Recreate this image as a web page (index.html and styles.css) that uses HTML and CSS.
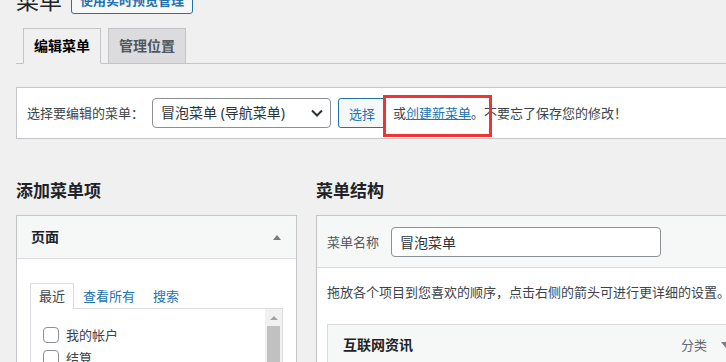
FILE: index.html
```html
<!DOCTYPE html>
<html>
<head>
  <meta charset="utf-8">
  <title>菜单</title>
  <link rel="stylesheet" href="styles.css">
</head>
<body>
  <div class="wrap">
    <div class="title-row">
      <h1>菜单</h1>
      <a class="title-action" href="#">使用实时预览管理</a>
    </div>

    <div class="nav-tabs">
      <a class="nav-tab active" href="#">编辑菜单</a>
      <a class="nav-tab" href="#">管理位置</a>
    </div>

    <div class="manage-menus">
      <label class="select-label">选择要编辑的菜单：</label>
      <div class="select">
        <span>冒泡菜单 (导航菜单)</span>
        <svg width="12" height="8" viewBox="0 0 12 8"><path d="M1 1.5l5 5 5-5" fill="none" stroke="#2c3338" stroke-width="2"/></svg>
      </div>
      <button class="button">选择</button>
      <span class="create-note">或<a href="#">创建新菜单</a>。不要忘了保存您的修改！</span>
      <div class="highlight"></div>
    </div>

    <div class="columns">
      <div class="settings-column">
        <h2>添加菜单项</h2>
        <div class="accordion">
          <div class="accordion-title">
            <h3>页面</h3>
            <span class="arrow-up"></span>
          </div>
          <div class="accordion-content">
            <ul class="tabs">
              <li class="active">最近</li>
              <li><a href="#">查看所有</a></li>
              <li><a href="#">搜索</a></li>
            </ul>
            <div class="tabs-panel">
              <ul class="checklist">
                <li><input type="checkbox">我的帐户</li>
                <li><input type="checkbox">结算</li>
                <li><input type="checkbox">购物车</li>
              </ul>
              <div class="scrollbar">
                <div class="scroll-btn"><span></span></div>
                <div class="scroll-thumb"></div>
              </div>
            </div>
          </div>
        </div>
      </div>

      <div class="management">
        <h2>菜单结构</h2>
        <div class="menu-edit">
          <div class="menu-edit-header">
            <label>菜单名称</label>
            <input class="menu-name" type="text" value="冒泡菜单">
          </div>
          <div class="menu-edit-body">
            <p>拖放各个项目到您喜欢的顺序，点击右侧的箭头可进行更详细的设置。</p>
            <div class="menu-item">
              <span class="item-title">互联网资讯</span>
              <span class="item-type">分类</span>
              <span class="arrow-down"></span>
            </div>
          </div>
        </div>
      </div>
    </div>
  </div>
</body>
</html>
```

FILE: styles.css
```css
/* WordPress style menu editor */
html,
body {
  margin: 0;
  height: 100%;
  overflow: hidden;
}

body {
  background: #f0f0f1;
  color: #3c434a;
  font-family: "Noto Sans", "Noto Sans CJK SC", sans-serif;
  font-size: 13px;
  line-height: 20px;
}

a {
  color: #2271b1;
}

.wrap {
  width: 1100px;
  padding-left: 16px;
}

.title-row {
  display: flex;
  align-items: center;
  height: 30px;
  margin-top: -15px;
}

.title-row h1 {
  margin: 0;
  font-size: 23px;
  font-weight: 400;
  line-height: 30px;
  color: #1d2327;
}

.title-action {
  margin-left: 9px;
  padding: 0 8px;
  border: 1px solid #2271b1;
  border-radius: 3px;
  background: #f6f7f7;
  font-size: 13px;
  font-weight: 600;
  line-height: 26px;
  text-decoration: none;
}

.nav-tabs {
  display: flex;
  margin-top: 13px;
  border-bottom: 1px solid #c3c4c7;
}

.nav-tab {
  margin-left: 7px;
  margin-bottom: -1px;
  padding: 5px 10px;
  border: 1px solid #c3c4c7;
  background: #dcdcde;
  color: #50575e;
  font-size: 14px;
  font-weight: 600;
  line-height: 24px;
  text-decoration: none;
}

.nav-tab.active {
  background: #f0f0f1;
  border-bottom-color: #f0f0f1;
  color: #000;
}

.manage-menus {
  position: relative;
  display: flex;
  align-items: center;
  margin-top: 23px;
  padding: 10px;
  border: 1px solid #c3c4c7;
  border-right: none;
  background: #fff;
}

.select-label {
  margin-right: 8px;
}

.select {
  display: flex;
  align-items: center;
  justify-content: space-between;
  box-sizing: border-box;
  width: 179px;
  height: 30px;
  padding: 0 7px 0 8px;
  border: 1px solid #8c8f94;
  border-radius: 4px;
  color: #2c3338;
  font-size: 14px;
}

.button {
  height: 30px;
  margin-left: 7px;
  padding: 0 10px;
  border: 1px solid #2271b1;
  border-radius: 3px;
  background: #f6f7f7;
  color: #2271b1;
  font-family: inherit;
  font-size: 13px;
}

.create-note {
  margin-left: 7px;
}

/* red annotation box */
.highlight {
  position: absolute;
  left: 366px;
  top: 7px;
  width: 109px;
  height: 42px;
  box-sizing: border-box;
  border: 3px solid #ef3434;
}

.columns {
  display: flex;
  gap: 19px;
  margin-top: 40px;
}

.columns h2 {
  margin: 0 0 12px;
  font-size: 17px;
  font-weight: 600;
  line-height: 24px;
  color: #1d2327;
}

.settings-column {
  width: 281px;
  flex-shrink: 0;
}

.accordion {
  border: 1px solid #c3c4c7;
  background: #fff;
}

.accordion-title {
  display: flex;
  align-items: center;
  justify-content: space-between;
  padding: 9px 15px 9px 14px;
  border-bottom: 1px solid #dcdcde;
  background: #f6f7f7;
}

.accordion-title h3 {
  margin: 0;
  font-size: 14px;
  font-weight: 600;
  line-height: 24px;
  color: #1d2327;
}

.arrow-up {
  width: 0;
  height: 0;
  border-left: 4px solid transparent;
  border-right: 4px solid transparent;
  border-bottom: 5px solid #787c82;
}

.accordion-content {
  padding: 24px 13px 0;
}

.tabs {
  display: flex;
  margin: 0;
  padding: 0;
  list-style: none;
}

.tabs li {
  margin-bottom: -1px;
  padding: 3px 8px;
  border: 1px solid transparent;
  border-bottom: none;
  line-height: 18px;
}

.tabs li a {
  text-decoration: none;
}

.tabs li.active {
  border-color: #dcdcde;
  background: #fff;
  padding-bottom: 4px;
}

.tabs-panel {
  display: flex;
  justify-content: space-between;
  height: 80px;
  border: 1px solid #dcdcde;
}

.checklist {
  margin: 0;
  padding: 14px 12px 0;
  list-style: none;
}

.checklist li {
  display: flex;
  align-items: center;
  height: 23px;
}

.checklist input {
  appearance: none;
  width: 16px;
  height: 16px;
  margin: 0 7px 0 0;
  border: 1px solid #8c8f94;
  border-radius: 4px;
  background: #fff;
}

.scrollbar {
  width: 17px;
  background: #f1f1f1;
}

.scroll-btn {
  display: flex;
  align-items: center;
  justify-content: center;
  height: 17px;
}

.scroll-btn span {
  width: 0;
  height: 0;
  border-left: 4px solid transparent;
  border-right: 4px solid transparent;
  border-bottom: 4px solid #a3a3a3;
}

.scroll-thumb {
  height: 60px;
  margin: 0 2px;
  background: #c1c1c1;
}

.management {
  flex: 1;
}

.menu-edit {
  border: 1px solid #c3c4c7;
  border-right: none;
  background: #fff;
}

.menu-edit-header {
  display: flex;
  align-items: center;
  padding: 11px 10px 10px;
  border-bottom: 1px solid #dcdcde;
  background: #f6f7f7;
}

.menu-edit-header label {
  margin-right: 12px;
  color: #50575e;
}

.menu-name {
  box-sizing: border-box;
  width: 270px;
  height: 30px;
  padding: 0 8px;
  border: 1px solid #8c8f94;
  border-radius: 4px;
  color: #2c3338;
  font-family: inherit;
  font-size: 14px;
}

.menu-edit-body {
  padding: 14px 10px 40px;
}

.menu-edit-body p {
  margin: 0 0 22px;
  white-space: nowrap;
}

.menu-item {
  display: flex;
  align-items: center;
  width: 420px;
  box-sizing: border-box;
  padding: 10px 15px;
  border: 1px solid #dcdcde;
  background: #f6f7f7;
}

.item-title {
  flex: 1;
  font-size: 14px;
  font-weight: 600;
  color: #1d2327;
}

.item-type {
  margin-right: 14px;
  color: #646970;
}

.arrow-down {
  width: 0;
  height: 0;
  border-left: 5px solid transparent;
  border-right: 5px solid transparent;
  border-top: 6px solid #787c82;
}
```
